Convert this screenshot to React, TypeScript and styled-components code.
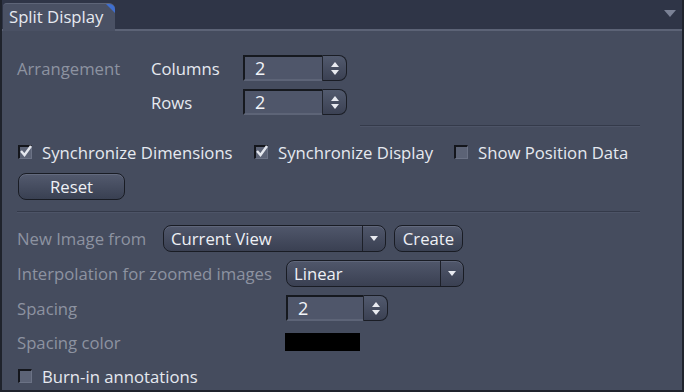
import React from "react";
import styled, { createGlobalStyle } from "styled-components";

const Global = createGlobalStyle`
  html, body { margin: 0; padding: 0; background: #1a1d24; }
  body { font-family: "Open Sans", "Noto Sans", sans-serif; }
`;

const Frame = styled.div`
  width: 684px;
  height: 392px;
  box-sizing: border-box;
  background: #454c5e;
  border-left: 2px solid #1f232c;
  border-right: 2px solid #1f232c;
  border-bottom: 2px solid #1f232c;
  display: flex;
  flex-direction: column;
  overflow: hidden;
`;

const Header = styled.div`
  height: 31px;
  box-sizing: border-box;
  background: #2f3547;
  border-bottom: 2px solid #5c6376;
  display: flex;
  align-items: flex-end;
  justify-content: space-between;
  padding-left: 1px;
`;

const Tab = styled.div`
  position: relative;
  height: 27px;
  margin-bottom: -2px;
  padding: 0 12px 0 6px;
  background: #4a5164;
  border-top-left-radius: 4px;
  border-top-right-radius: 6px;
  border-top: 1px solid #5e6578;
  color: #e6e9f0;
  font-size: 16.7px;
  line-height: 25px;
  overflow: hidden;
  white-space: nowrap;
`;

const TabCorner = styled.div`
  position: absolute;
  top: 0;
  right: 0;
  width: 0;
  height: 0;
  border-top: 9px solid #3f6fd0;
  border-left: 9px solid transparent;
`;

const HeaderArrow = styled.div`
  width: 0;
  height: 0;
  border-left: 6px solid transparent;
  border-right: 6px solid transparent;
  border-top: 7px solid #7b8296;
  margin: 0 6px 12px 0;
  align-self: flex-end;
`;

const Content = styled.div`
  display: flex;
  flex-direction: column;
  padding: 24px 0 0 15px;
  color: #e6e9f0;
  font-size: 16.7px;
`;

const ArrangeGrid = styled.div`
  display: grid;
  grid-template-columns: 134px 92px auto;
  grid-auto-rows: 26px;
  row-gap: 8px;
  align-items: center;
`;

const Muted = styled.span`
  color: #8d93a1;
  white-space: nowrap;
`;

const Label = styled.span`
  color: #e6e9f0;
  white-space: nowrap;
`;

const Separator = styled.div<{ $left: number; $width: number; $top: number }>`
  height: 1px;
  background: #343a4a;
  border-bottom: 1px solid #4d5467;
  margin-left: ${(p) => p.$left}px;
  width: ${(p) => p.$width}px;
  margin-top: ${(p) => p.$top}px;
`;

const SpinWrap = styled.div<{ $w: number }>`
  display: flex;
  width: ${(p) => p.$w}px;
  height: 26px;
`;

const SpinInput = styled.div`
  flex: 1;
  box-sizing: border-box;
  background: #4f566a;
  border-top: 2px solid #16191f;
  border-left: 2px solid #16191f;
  border-bottom: 2px solid #5d6477;
  padding-left: 10px;
  color: #f2f4f8;
  font-size: 18px;
  line-height: 22px;
`;

const SpinButton = styled.div`
  width: 25px;
  box-sizing: border-box;
  background: linear-gradient(#525a6e, #3b4153);
  border: 1px solid #1a1d25;
  border-left: 1px solid #22262f;
  border-radius: 0 8px 8px 0;
  display: flex;
  flex-direction: column;
  align-items: center;
  justify-content: center;
  gap: 3px;
`;

const Tri = styled.div<{ $dir: "up" | "down" }>`
  width: 0;
  height: 0;
  border-left: 4px solid transparent;
  border-right: 4px solid transparent;
  ${(p) =>
    p.$dir === "up"
      ? "border-bottom: 5px solid #e8eaf0;"
      : "border-top: 5px solid #e8eaf0;"}
`;

const Spin = ({ value, width }: { value: string; width: number }) => (
  <SpinWrap $w={width}>
    <SpinInput>{value}</SpinInput>
    <SpinButton>
      <Tri $dir="up" />
      <Tri $dir="down" />
    </SpinButton>
  </SpinWrap>
);

const CheckRow = styled.div`
  display: flex;
  align-items: center;
  height: 24px;
  margin-top: 13px;
  margin-left: 1px;
`;

const CheckItem = styled.label<{ $w?: number }>`
  display: flex;
  align-items: center;
  gap: 10px;
  width: ${(p) => (p.$w ? `${p.$w}px` : "auto")};
  white-space: nowrap;
`;

const Box = styled.span`
  position: relative;
  width: 14px;
  height: 14px;
  box-sizing: border-box;
  background: #5c6376;
  border-top: 2px solid #14161c;
  border-left: 2px solid #14161c;
  border-bottom: 1px solid #6b7285;
  border-right: 1px solid #6b7285;
  flex: none;
`;

const CheckSvg = styled.svg`
  position: absolute;
  left: -1px;
  top: -3px;
`;

const Check = ({ checked, label, width }: { checked: boolean; label: string; width?: number }) => (
  <CheckItem $w={width}>
    <Box>
      {checked && (
        <CheckSvg width="14" height="14" viewBox="0 0 14 14">
          <path d="M2 7 L5.5 11 L12 2" stroke="#e4e7ee" strokeWidth="2.4" fill="none" />
        </CheckSvg>
      )}
    </Box>
    {label}
  </CheckItem>
);

const Button = styled.div<{ $w: number }>`
  width: ${(p) => p.$w}px;
  height: 27px;
  box-sizing: border-box;
  border: 1px solid #191c24;
  border-radius: 8px;
  background: linear-gradient(#535a6e, #394052);
  box-shadow: inset 0 1px 0 #636a7e;
  display: flex;
  align-items: center;
  justify-content: center;
  color: #eef0f5;
  font-size: 16.7px;
  flex: none;
`;

const ResetRow = styled.div`
  margin-top: 9px;
  margin-left: 1px;
`;

const FormGrid = styled.div`
  display: grid;
  grid-template-columns: max-content;
  margin-top: 12px;
`;

const FormRow = styled.div<{ $h: number; $gap?: number; $indent?: number }>`
  display: flex;
  align-items: center;
  height: ${(p) => p.$h}px;
  margin-bottom: ${(p) => p.$gap ?? 8}px;
  margin-left: ${(p) => p.$indent ?? 0}px;
  gap: 8px;
`;

const LabelCell = styled.div<{ $w: number }>`
  width: ${(p) => p.$w}px;
  flex: none;
  margin-right: -8px;
`;

const Select = styled.div<{ $w: number }>`
  width: ${(p) => p.$w}px;
  height: 27px;
  box-sizing: border-box;
  border: 1px solid #191c24;
  border-radius: 8px;
  background: linear-gradient(#50576b, #3a4052);
  box-shadow: inset 0 1px 0 #5f667a;
  display: flex;
  align-items: center;
  color: #eef0f5;
  font-size: 16.7px;
  flex: none;
`;

const SelectText = styled.span`
  flex: 1;
  padding-left: 7px;
`;

const SelectArrow = styled.span`
  width: 22px;
  align-self: stretch;
  border-left: 1px solid #1d2029;
  display: flex;
  align-items: center;
  justify-content: center;
`;

const Swatch = styled.div`
  width: 75px;
  height: 18px;
  background: #000;
`;

const App = () => (
  <>
    <Global />
    <Frame>
      <Header>
        <Tab>
          Split Display
          <TabCorner />
        </Tab>
        <HeaderArrow />
      </Header>
      <Content>
        <ArrangeGrid>
          <Muted>Arrangement</Muted>
          <Label>Columns</Label>
          <Spin value="2" width={104} />
          <span />
          <Label>Rows</Label>
          <Spin value="2" width={104} />
        </ArrangeGrid>
        <Separator $left={343} $width={280} $top={10} />
        <CheckRow>
          <Check checked label="Synchronize Dimensions" width={236} />
          <Check checked label="Synchronize Display" width={200} />
          <Check checked={false} label="Show Position Data" />
        </CheckRow>
        <ResetRow>
          <Button $w={107}>Reset</Button>
        </ResetRow>
        <Separator $left={0} $width={623} $top={11} />
        <FormGrid>
          <FormRow $h={27}>
            <LabelCell $w={146}>
              <Muted>New Image from</Muted>
            </LabelCell>
            <Select $w={223}>
              <SelectText>Current View</SelectText>
              <SelectArrow>
                <Tri $dir="down" />
              </SelectArrow>
            </Select>
            <Button $w={69}>Create</Button>
          </FormRow>
          <FormRow $h={27}>
            <LabelCell $w={269}>
              <Muted>Interpolation for zoomed images</Muted>
            </LabelCell>
            <Select $w={178}>
              <SelectText>Linear</SelectText>
              <SelectArrow>
                <Tri $dir="down" />
              </SelectArrow>
            </Select>
          </FormRow>
          <FormRow $h={26}>
            <LabelCell $w={269}>
              <Muted>Spacing</Muted>
            </LabelCell>
            <Spin value="2" width={102} />
          </FormRow>
          <FormRow $h={26}>
            <LabelCell $w={268}>
              <Muted>Spacing color</Muted>
            </LabelCell>
            <Swatch />
          </FormRow>
          <FormRow $h={26} $gap={0} $indent={1}>
            <Check checked={false} label="Burn-in annotations" />
          </FormRow>
        </FormGrid>
      </Content>
    </Frame>
  </>
);

export default App;
